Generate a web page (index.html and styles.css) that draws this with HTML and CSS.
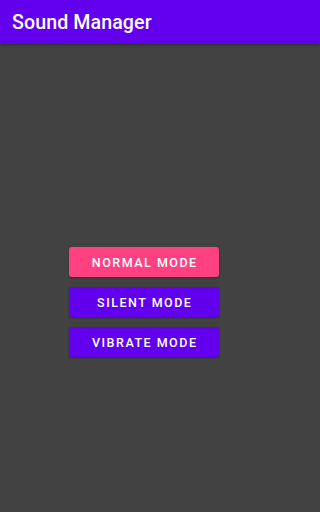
FILE: index.html
```html
<!DOCTYPE html>
<html>
<head>
<meta charset="utf-8">
<link rel="stylesheet" href="styles.css">
</head>
<body>
<header class="appbar"><h1 class="title">Sound Manager</h1></header>
<main class="content">
  <div class="buttons">
    <button class="btn btn-normal">NORMAL MODE</button>
    <button class="btn btn-primary">SILENT MODE</button>
    <button class="btn btn-primary">VIBRATE MODE</button>
  </div>
</main>
</body>
</html>
```
FILE: styles.css
```css
html {
  margin: 0;
  padding: 0;
  height: 100%;
  background: #424242;
}
body {
  margin: 0;
  padding: 0;
  height: 100%;
  background: #424242;
  font-family: Roboto, "Noto Sans", sans-serif;
  display: flex;
  flex-direction: column;
}
.appbar {
  height: 44px;
  background: #6200ee;
  display: flex;
  align-items: center;
  padding: 0 12px;
  box-shadow: 0 1px 3px rgba(0,0,0,0.35);
  flex: none;
}
.title {
  margin: 0;
  color: #ffffff;
  font-size: 19.6px;
  font-weight: 500;
  letter-spacing: 0.1px;
}
.content {
  flex: 1;
  width: 288px;
  display: flex;
  justify-content: center;
  padding-top: 203px;
}
.buttons {
  display: flex;
  flex-direction: column;
  gap: 10px;
  width: 150px;
}
.btn {
  height: 30px;
  border: none;
  border-radius: 3px;
  color: #ffffff;
  font-family: Roboto, sans-serif;
  font-weight: 500;
  font-size: 12.5px;
  letter-spacing: 1.5px;
  padding: 0 0 0 1.5px;
  box-shadow: 0 1px 2px rgba(0,0,0,0.3);
}
.btn-normal { background: #ff4081; }
.btn-primary { background: #6200ee; }
```
